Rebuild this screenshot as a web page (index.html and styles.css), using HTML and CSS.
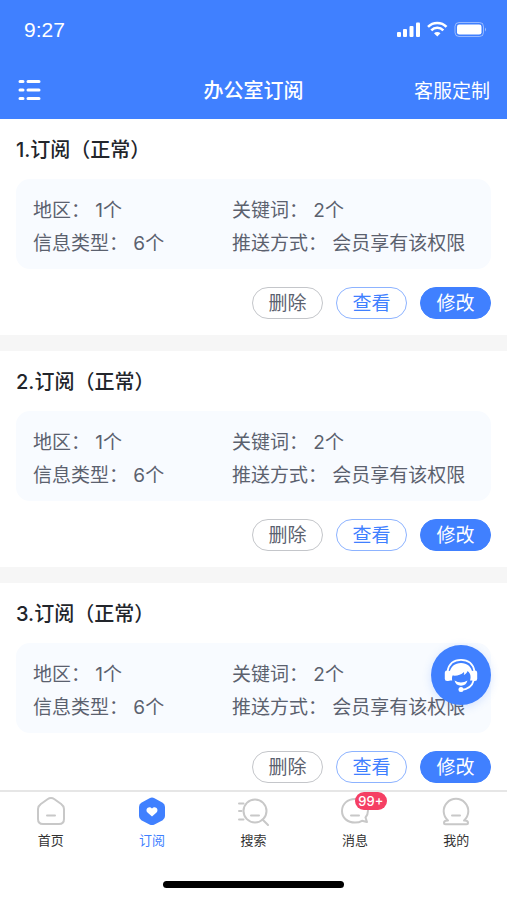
FILE: index.html
```html
<!DOCTYPE html>
<html lang="zh-CN">
<head>
<meta charset="utf-8">
<meta name="viewport" content="width=device-width, initial-scale=1">
<title>办公室订阅</title>
<link rel="stylesheet" href="styles.css">
</head>
<body>
<header class="top">
  <div class="status">
    <span class="time">9:27</span>
    <svg class="signals" width="92" height="18" viewBox="0 0 92 18" fill="#fff" aria-hidden="true">
      <rect x="1" y="11" width="4" height="5" rx="1"/>
      <rect x="7" y="8" width="4" height="8" rx="1"/>
      <rect x="13.500" y="5" width="4" height="11" rx="1"/>
      <rect x="20" y="1.500" width="4" height="14.500" rx="1"/>
      <g fill="none" stroke="#fff" stroke-width="2.600">
        <path d="M32 5.800a13 13 0 0 1 18.500 0"/>
        <path d="M35.300 9.300a8.500 8.500 0 0 1 12 0"/>
      </g>
      <path d="M38 12.300a4.700 4.700 0 0 1 6.500 0L41.300 15.500z"/>
      <rect x="59" y="1.500" width="28.500" height="14" rx="4" fill="none" stroke="#fff" stroke-opacity=".45"/>
      <rect x="61" y="3.500" width="24.500" height="10" rx="2.300"/>
      <path d="M89 6.500q2 2 0 4z" opacity=".5"/>
    </svg>
  </div>
  <div class="bar">
    <button class="menu" type="button" aria-label="菜单">
      <svg width="24" height="22" viewBox="0 0 24 22" fill="none" stroke="#fff" stroke-width="3" stroke-linecap="round" aria-hidden="true">
        <path d="M3 2.500h3M11 2.500h11M3 11h3M11 11h11M3 19.500h3M11 19.500h11"/>
      </svg>
    </button>
    <h1>办公室订阅</h1>
    <a class="custom" href="#custom">客服定制</a>
  </div>
</header>

<main class="list">
  <section class="card">
    <h2>1.订阅（正常）</h2>
    <div class="info">
      <span>地区： 1个</span><span>关键词： 2个</span>
      <span>信息类型： 6个</span><span>推送方式： 会员享有该权限</span>
    </div>
    <div class="actions">
      <button class="btn" type="button">删除</button>
      <button class="btn view" type="button">查看</button>
      <button class="btn edit" type="button">修改</button>
    </div>
  </section>
  <section class="card">
    <h2>2.订阅（正常）</h2>
    <div class="info">
      <span>地区： 1个</span><span>关键词： 2个</span>
      <span>信息类型： 6个</span><span>推送方式： 会员享有该权限</span>
    </div>
    <div class="actions">
      <button class="btn" type="button">删除</button>
      <button class="btn view" type="button">查看</button>
      <button class="btn edit" type="button">修改</button>
    </div>
  </section>
  <section class="card">
    <h2>3.订阅（正常）</h2>
    <div class="info">
      <span>地区： 1个</span><span>关键词： 2个</span>
      <span>信息类型： 6个</span><span>推送方式： 会员享有该权限</span>
    </div>
    <div class="actions">
      <button class="btn" type="button">删除</button>
      <button class="btn view" type="button">查看</button>
      <button class="btn edit" type="button">修改</button>
    </div>
  </section>
</main>

<button class="service" type="button" aria-label="客服">
  <svg width="36" height="36" viewBox="0 0 36 36" aria-hidden="true">
    <path d="M4.500 14C6 6.500 11 2.800 18 2.800S30 6.500 31.500 14" fill="none" stroke="#fff" stroke-width="1.800"/>
    <path d="M6.500 23.500V16C7.500 9.500 12 6 18 6s10.500 3.500 11.500 10v7.500h-2.500c.7-2 .8-4.500 0-6.500-.6-1.300-1.400-2.200-2.500-3-.4 1.800-1.800 3.200-3.700 3.900.4-.9.500-1.800.2-2.900C17.800 18.200 13.500 19 9.500 18.500c-.6 1.600-.6 3.400-.3 5z" fill="#fff"/>
    <path d="M11.500 23.500q6.500 4 13 0-1.500 5.200-6.500 5.200t-6.500-5.200z" fill="#fff"/>
    <rect x="1.800" y="13.500" width="5.700" height="10.500" rx="2.300" fill="#fff"/>
    <rect x="28.500" y="13.500" width="5.700" height="10.500" rx="2.300" fill="#fff"/>
    <path d="M30.800 23c-1.500 6-5.500 9.500-12.800 9.800" fill="none" stroke="#fff" stroke-width="1.800"/>
    <circle cx="18" cy="32.500" r="2.500" fill="#fff"/>
  </svg>
</button>

<footer class="bottom">
  <nav class="tabs">
    <a href="#home">
      <svg class="icon" viewBox="0 0 32 30" aria-hidden="true"><path d="M12.500 3.200 5.500 8.300Q3 10 3 13v10q0 5 5 5h16q5 0 5-5V13q0-3-2.500-4.700l-7-5.100q-3.500-2.400-7 0z"/><path d="M12 19.500h8"/></svg>
      <span>首页</span>
    </a>
    <a class="active" href="#subscribe" aria-current="page">
      <svg class="icon" viewBox="0 0 32 30" aria-hidden="true"><path class="solid" d="M13.500 2.200 5.300 6.800Q3 8.200 3 11v9q0 2.800 2.300 4.200l8.200 4.200q2.500 1.200 5 0l8.200-4.200Q29 22.800 29 20v-9q0-2.800-2.300-4.200l-8.200-4.600q-2.500-1.200-5 0z"/><path class="heart" d="M16 20.500 11.500 16.500C8.500 13 13 9 16 12.500c3-3.500 7.500.5 4.500 4z"/></svg>
      <span>订阅</span>
    </a>
    <a href="#search">
      <svg class="icon" viewBox="0 0 32 30" aria-hidden="true"><circle cx="18" cy="15" r="11.500"/><path d="M25.500 23.500 31 29M14 19.500h8M2 7.500h4.500M2 15h2.500M2 23.500h4.500"/></svg>
      <span>搜索</span>
    </a>
    <a href="#message">
      <svg class="icon" viewBox="0 0 32 30" aria-hidden="true"><path d="M16 3C8.500 3 3 8 3 15s5.500 11.500 13 11.500c3 0 5-.5 7-1.700l5 1.200-1.500-4.500Q29 18.500 29 14.500C29 8 23.500 3 16 3z"/><path d="M12 19.500h8"/></svg>
      <b class="badge">99+</b>
      <span>消息</span>
    </a>
    <a href="#me">
      <svg class="icon" viewBox="0 0 32 30" aria-hidden="true"><path d="M8 24.500A12.300 12.300 0 1 1 24 24.500q4 0 4 2.300 0 1.500-1.500 1.500h-21Q4 28.300 4 26.800q0-2.300 4-2.300z"/><path d="M12 19.500h8"/></svg>
      <span>我的</span>
    </a>
  </nav>
  <div class="home-line"></div>
</footer>
</body>
</html>
```
FILE: styles.css
```css
* {
  box-sizing: border-box;
}

body {
  margin: 0;
  height: 100vh;
  display: flex;
  flex-direction: column;
  overflow: hidden;
  background: #f6f6f6;
  color: #5b616e;
  font-family: Inter, "Noto Sans CJK SC", sans-serif;
  font-size: 19px;
}

button {
  font: inherit;
  color: inherit;
  background: none;
  border: 0;
  padding: 0;
  cursor: pointer;
}

a {
  color: inherit;
  text-decoration: none;
}

.top {
  flex: none;
  background: #4080ff;
  color: #fff;
}

.status {
  display: flex;
  align-items: center;
  justify-content: space-between;
  height: 60px;
  padding: 0 19px 0 24px;
}

.time {
  font-family: "Liberation Sans", sans-serif;
  font-size: 21px;
}

.bar {
  display: grid;
  grid-template-columns: 1fr auto 1fr;
  align-items: center;
  height: 59px;
  padding: 0 17px;
}

.menu {
  display: flex;
  justify-self: start;
}

h1 {
  margin: 0;
  font-size: 20px;
  font-weight: 500;
}

.custom {
  justify-self: end;
}

.list {
  flex: 1;
  min-height: 0;
  overflow: hidden;
  display: flex;
  flex-direction: column;
  gap: 16px;
}

.card {
  flex: none;
  padding: 16px;
  background: #fff;
}

h2 {
  margin: 0 0 14px;
  font-size: 20px;
  line-height: 30px;
  font-weight: 500;
  color: #22252b;
}

.info {
  display: grid;
  grid-template-columns: 199px 1fr;
  padding: 15px 17px 9px;
  line-height: 33px;
  border-radius: 14px;
  background: #f8fbff;
  white-space: nowrap;
}

.actions {
  display: flex;
  justify-content: flex-end;
  gap: 13px;
  margin-top: 18px;
}

.btn {
  width: 71px;
  height: 32px;
  padding-top: 1px;
  line-height: 30px;
  border: 1px solid #c4c6ca;
  border-radius: 16px;
}

.view {
  color: #4080ff;
  border-color: #8db3ff;
}

.edit {
  color: #fff;
  background: #4080ff;
  border-color: #4080ff;
}

.service {
  position: fixed;
  right: 16px;
  bottom: 195px;
  display: flex;
  align-items: center;
  justify-content: center;
  width: 60px;
  height: 60px;
  border-radius: 50%;
  background: #4080ff;
  box-shadow: 0 2px 10px rgba(64, 128, 255, .2);
}

.bottom {
  flex: none;
  border-top: 2px solid #e6e6e6;
  background: #fff;
}

.tabs {
  display: grid;
  grid-template-columns: repeat(5, 1fr);
  height: 89px;
  padding-top: 4px;
}

.tabs a {
  position: relative;
  display: flex;
  flex-direction: column;
  align-items: center;
  gap: 4px;
  height: 54px;
  font-size: 13px;
  line-height: 20px;
  color: #333;
}

.tabs .active {
  color: #4080ff;
}

.icon {
  width: 32px;
  height: 30px;
  fill: none;
  stroke: #c8c8c8;
  stroke-width: 2;
  stroke-linecap: round;
  stroke-linejoin: round;
}

.icon .solid {
  fill: #4080ff;
  stroke: none;
}

.icon .heart {
  fill: #fff;
  stroke: none;
}

.badge {
  position: absolute;
  top: -4px;
  left: 50%;
  width: 32px;
  height: 18px;
  border-radius: 9px;
  background: #f53f63;
  color: #fff;
  font-size: 13px;
  font-weight: 500;
  line-height: 18px;
  text-align: center;
}

.home-line {
  width: 181px;
  height: 7px;
  margin: 0 auto 12px;
  border-radius: 4px;
  background: #000;
}
```
